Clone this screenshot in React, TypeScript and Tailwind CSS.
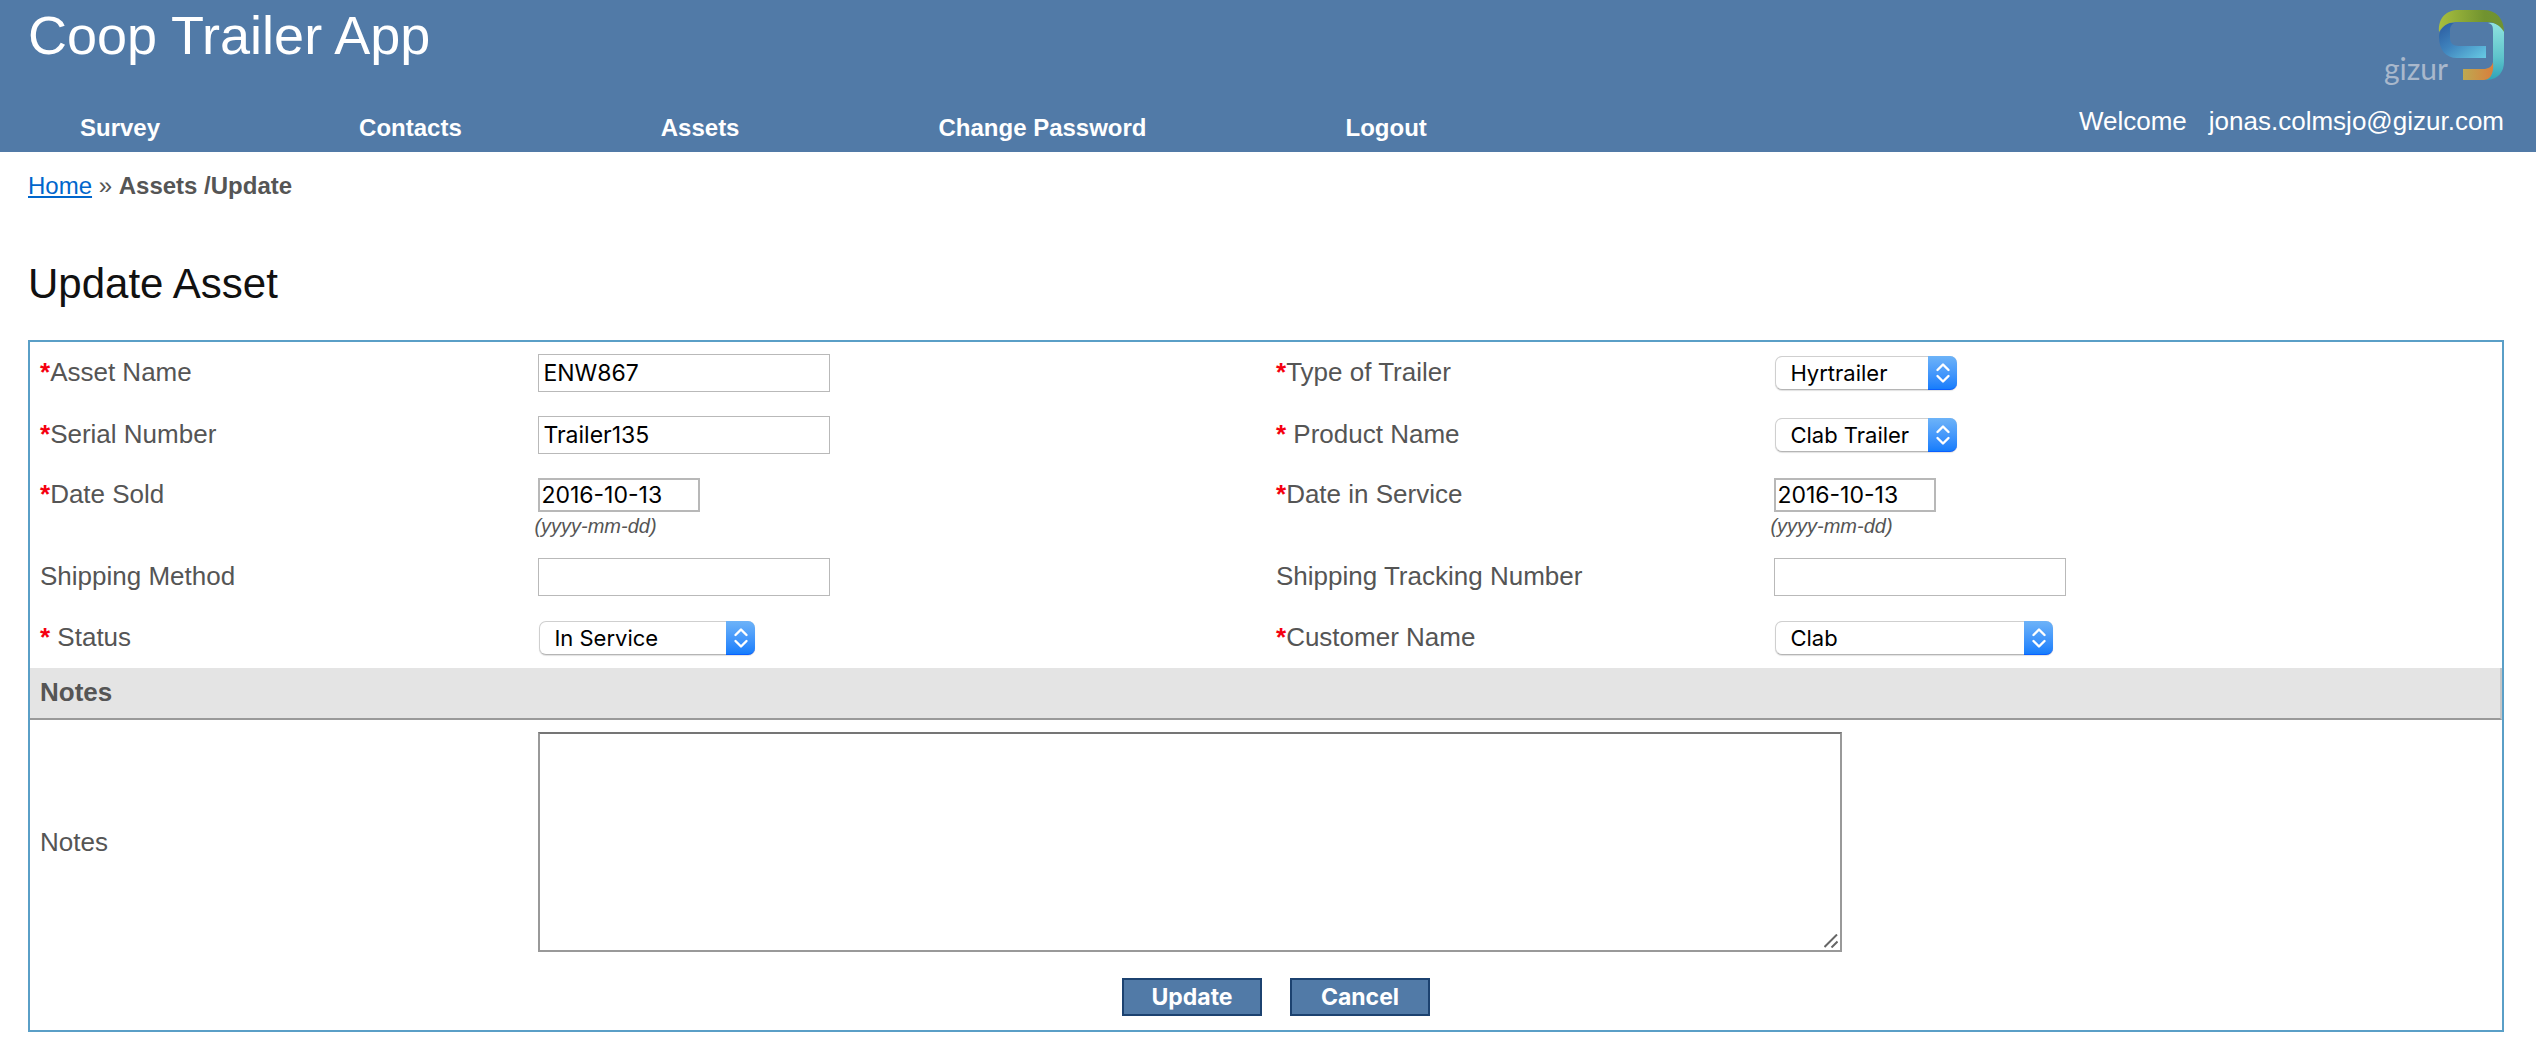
import { useId } from 'react';
import type { ReactNode } from 'react';

const navItems = ['Survey', 'Contacts', 'Assets', 'Change Password', 'Logout'];

function Logo() {
  return (
    <svg width="120" height="90" viewBox="0 0 120 90" role="img" aria-label="gizur">
      <defs>
        <linearGradient id="lg-green" x1="0" x2="1" y1="0" y2="0">
          <stop offset="0" stopColor="#a8bf3e" />
          <stop offset="0.7" stopColor="#71932f" />
          <stop offset="1" stopColor="#6f9233" />
        </linearGradient>
        <linearGradient id="lg-blue" x1="0" x2="1" y1="0" y2="1">
          <stop offset="0" stopColor="#2a5a9f" />
          <stop offset="0.45" stopColor="#3f83bd" />
          <stop offset="1" stopColor="#67cae4" />
        </linearGradient>
        <linearGradient id="lg-teal" x1="0" x2="0" y1="0" y2="1">
          <stop offset="0" stopColor="#8fe3df" />
          <stop offset="0.6" stopColor="#5fc4cc" />
          <stop offset="1" stopColor="#2fa3b8" />
        </linearGradient>
        <linearGradient id="lg-orange" x1="0" x2="1" y1="0" y2="0">
          <stop offset="0" stopColor="#bda951" />
          <stop offset="1" stopColor="#d97f3c" />
        </linearGradient>
      </defs>
      <path d="M64 23C60 26 55 30 55 37C55 50 62 58 73 58H102V46H75C69 46 66 43 66 38V30C66 27 67 25 70 23Z" fill="url(#lg-blue)" />
      <path d="M104 23C109 24 109 27 109 32V62C109 71 106 77 102 80H104C114 79 120 72 120 62V31C117 26 112 22 104 23Z" fill="url(#lg-teal)" />
      <path d="M79 69H101C106 68 108 66 109 62C110 70 108 80 100 80H79Z" fill="url(#lg-orange)" />
      <path d="M55 32C54 18 62 10 75 10H99C112 10 120 18 120 32C116 25 110 22 103 22H74C66 22 60 24 55 32Z" fill="url(#lg-green)" />
      <text x="0" y="80" fill="#a9b8cc" fontFamily="Lato, sans-serif" fontSize="30">gizur</text>
    </svg>
  );
}

function Cell({
  label,
  required,
  spaced,
  top,
  children,
}: {
  label: string;
  required?: boolean;
  spaced?: boolean;
  top?: boolean;
  children: (id: string) => ReactNode;
}) {
  const id = useId();
  return (
    <div className={top ? 'grid grid-cols-[2fr_3fr] items-start pt-3' : 'grid grid-cols-[2fr_3fr] items-center'}>
      <label htmlFor={id} className="pb-0.5 pl-[10px] text-[26px] leading-8">
        {required && <span className="font-bold text-[#f50010]">*</span>}
        {spaced && ' '}
        {label}
      </label>
      <div className="pl-[14px]">{children(id)}</div>
    </div>
  );
}

function TextField({ id, value }: { id: string; value: string }) {
  return (
    <input
      id={id}
      type="text"
      defaultValue={value}
      className="block h-[38px] w-[292px] border border-[#b9b9b9] bg-white pl-1 font-[Inter,sans-serif] text-[23px] text-black"
    />
  );
}

function DateField({ id, value }: { id: string; value: string }) {
  return (
    <>
      <input
        id={id}
        type="text"
        defaultValue={value}
        className="block h-[34px] w-[162px] border-2 border-[#b8b8b8] bg-white pl-px font-[Inter,sans-serif] text-[23px] text-black"
      />
      <em className="-ml-1 mt-0.5 block text-xl leading-6">(yyyy-mm-dd)</em>
    </>
  );
}

function SelectField({ id, value, width }: { id: string; value: string; width: string }) {
  return (
    <div className={'relative ml-px h-[34px] ' + width}>
      <select
        id={id}
        defaultValue={value}
        className="block h-full w-full appearance-none rounded-[7px] border border-[#cfcfcf] border-b-[#b5b5b5] bg-white pl-[14px] font-[Inter,sans-serif] text-[22px] leading-7 text-black shadow-[0_1px_1px_rgba(0,0,0,0.12)]"
      >
        <option>{value}</option>
      </select>
      <span className="pointer-events-none absolute inset-y-0 right-0 flex w-[29px] items-center justify-center rounded-r-[7px] border-b border-b-[#0a5fff] bg-linear-to-b from-[#6db3f8] to-[#157dfc]">
        <svg width="16" height="22" viewBox="0 0 16 22" fill="none" stroke="#fff" strokeWidth="2.4" strokeLinecap="round" strokeLinejoin="round">
          <path d="M2.500 8L8 2.500L13.500 8M2.500 14L8 19.500L13.500 14" />
        </svg>
      </span>
    </div>
  );
}

export default function App() {
  const notesId = useId();
  const button =
    'h-[38px] w-[140px] border-2 border-[#1c4270] bg-[#517aa7] font-[Inter,sans-serif] text-[23px] leading-none font-bold text-white';
  return (
    <div className="bg-white font-['Liberation_Sans',Arial,sans-serif] text-[#555555]">
      <header className="flex h-[152px] justify-between bg-[#517aa7] pr-8 pl-7 text-white">
        <div className="flex flex-col justify-between pt-1 pb-[11px]">
          <div className="text-[54px] leading-[62px]">Coop Trailer App</div>
          <nav>
            <ul className="flex gap-[199px] pl-[52px] text-2xl leading-[26px] font-bold">
              {navItems.map((item) => (
                <li key={item}>
                  <a href="#">{item}</a>
                </li>
              ))}
            </ul>
          </nav>
        </div>
        <div className="flex flex-col items-end">
          <Logo />
          <div className="mt-4 flex gap-[22px] text-[26px] leading-[30px]">
            <span>Welcome</span>
            <span>jonas.colmsjo@gizur.com</span>
          </div>
        </div>
      </header>

      <main className="pr-8 pl-7">
        <div className="pt-5 text-2xl leading-7">
          <a href="#" className="text-[#0066cc] underline">
            Home
          </a>{' '}
          » <strong>Assets /Update</strong>
        </div>
        <h1 className="mt-[60px] text-[42px] leading-[48px] text-[#111111]">Update Asset</h1>

        <form className="mt-8 border-2 border-[#5a9fc7]">
          <div className="grid grid-cols-2 grid-rows-[62px_62px_80px_62px_60px]">
            <Cell label="Asset Name" required>
              {(id) => <TextField id={id} value="ENW867" />}
            </Cell>
            <Cell label="Type of Trailer" required>
              {(id) => <SelectField id={id} value="Hyrtrailer" width="w-[182px]" />}
            </Cell>
            <Cell label="Serial Number" required>
              {(id) => <TextField id={id} value="Trailer135" />}
            </Cell>
            <Cell label="Product Name" required spaced>
              {(id) => <SelectField id={id} value="Clab Trailer" width="w-[182px]" />}
            </Cell>
            <Cell label="Date Sold" required top>
              {(id) => <DateField id={id} value="2016-10-13" />}
            </Cell>
            <Cell label="Date in Service" required top>
              {(id) => <DateField id={id} value="2016-10-13" />}
            </Cell>
            <Cell label="Shipping Method">{(id) => <TextField id={id} value="" />}</Cell>
            <Cell label="Shipping Tracking Number">{(id) => <TextField id={id} value="" />}</Cell>
            <Cell label="Status" required spaced>
              {(id) => <SelectField id={id} value="In Service" width="w-[216px]" />}
            </Cell>
            <Cell label="Customer Name" required>
              {(id) => <SelectField id={id} value="Clab" width="w-[278px]" />}
            </Cell>
          </div>
          <h2 className="h-[52px] border-r-2 border-b-2 border-r-[#c6c6c6] border-b-[#999999] bg-[#e4e4e4] pl-[10px] text-[26px] leading-[48px] font-bold">
            Notes
          </h2>
          <div className="grid grid-cols-[1fr_4fr] items-center py-3">
            <label htmlFor={notesId} className="pl-[10px] text-[26px] leading-8">
              Notes
            </label>
            <div className="pl-[14px]">
              <div className="relative w-[1304px]">
                <textarea
                  id={notesId}
                  className="block h-[220px] w-full resize-none border-2 border-[#999999] border-t-[#757575] bg-white p-1 font-[Inter,sans-serif] text-[22px] text-black"
                />
                <svg className="pointer-events-none absolute right-1 bottom-1" width="14" height="14" viewBox="0 0 14 14" stroke="#666" strokeWidth="2" aria-hidden="true">
                  <path d="M0.500 13L13 0.500M7.500 13.500L13.500 7.500" />
                </svg>
              </div>
            </div>
          </div>
          <div className="flex justify-center gap-7 py-[14px] pl-5">
            <button type="button" className={button}>
              Update
            </button>
            <button type="button" className={button}>
              Cancel
            </button>
          </div>
        </form>
      </main>
    </div>
  );
}
